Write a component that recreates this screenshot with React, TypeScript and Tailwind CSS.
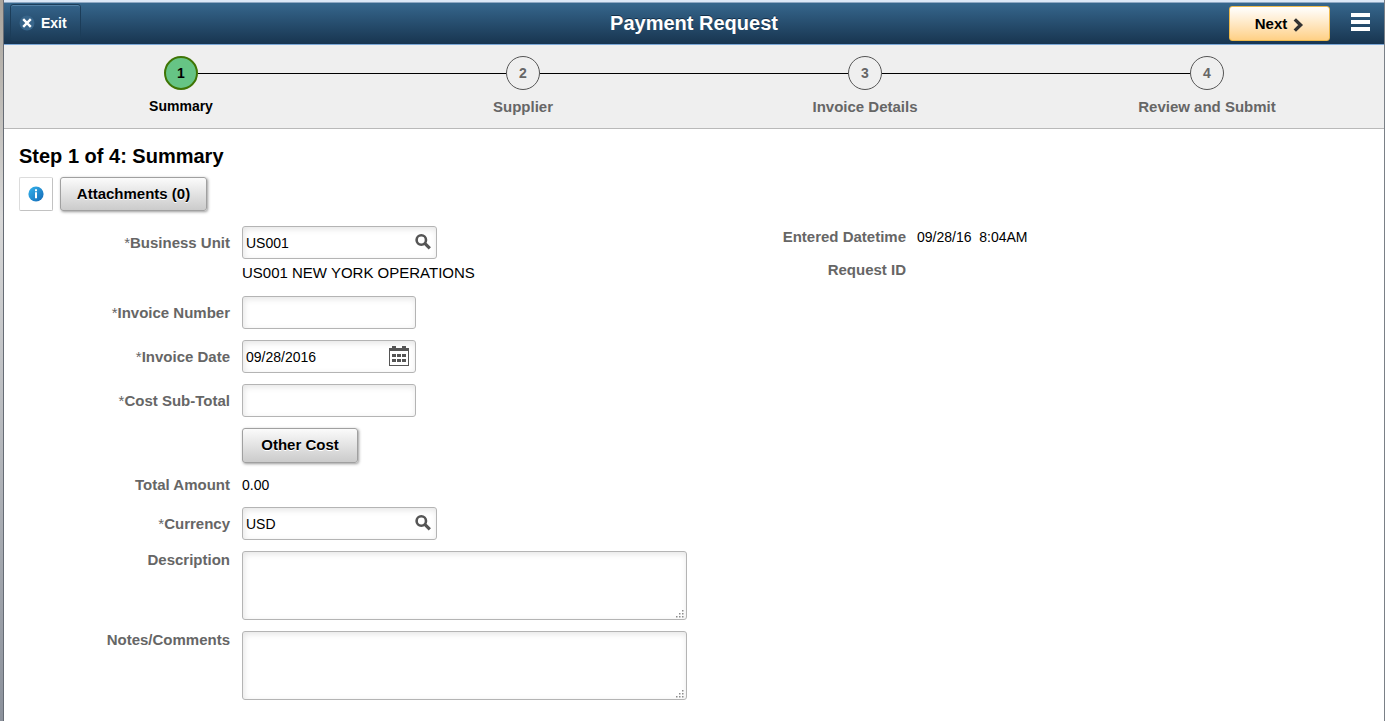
import type { ReactNode } from "react";

const fieldBox =
  "flex items-center h-[33px] rounded-[3px] border border-[#b4b4b4] bg-white shadow-[inset_1px_2px_6px_#e4e4e4]";
const fieldInput =
  "h-full w-full min-w-0 bg-transparent pl-[3px] text-sm text-black outline-none";
const greyButton =
  "rounded-[3px] border border-[#a0a0a0] bg-linear-to-b from-[#fbfbfb] to-[#cbcbcb] text-[15px] font-bold text-black shadow-[1px_1px_3px_#999999] [text-shadow:0_1px_0_#ffffff]";

const steps = ["Summary", "Supplier", "Invoice Details", "Review and Submit"];

function SearchIcon() {
  return (
    <svg width="16" height="16" viewBox="0 0 16 16" fill="none" stroke="#555555">
      <circle cx="6.3" cy="6" r="4.7" strokeWidth="2.6" />
      <path d="M9.8 9.4l5 5" strokeWidth="3.2" />
    </svg>
  );
}

function CalendarIcon() {
  return (
    <svg width="20" height="20" viewBox="0 0 20 20" fill="#555555">
      <path d="M0 2h3V0h4v2h6V0h4v2h3v18H0z M1 5v14h18V5z" fillRule="evenodd" />
      {[8, 13].map((y) =>
        [3, 8, 13].map((x) => <rect key={`${x}-${y}`} x={x} y={y} width="4" height="3" />)
      )}
    </svg>
  );
}

function Grip() {
  return (
    <svg
      className="pointer-events-none absolute right-[3px] bottom-[2px]"
      width="8"
      height="8"
      viewBox="0 0 8 8"
      fill="#8c8c8c"
    >
      <path d="M6 0h1.5v1.5H6z M3 3h1.5v1.5H3z M6 3h1.5v1.5H6z M0 6h1.5v1.5H0z M3 6h1.5v1.5H3z M6 6h1.5v1.5H6z" />
    </svg>
  );
}

type RowProps = {
  label?: string;
  htmlFor?: string;
  required?: boolean;
  short?: boolean;
  children?: ReactNode;
};

function Row({ label, htmlFor, required, short, children }: RowProps) {
  return (
    <div className="flex gap-3">
      <label
        htmlFor={htmlFor}
        className={`w-[211px] shrink-0 text-right text-[15px] font-bold text-[#666666] ${
          short ? "leading-[18px]" : "leading-[33px]"
        }`}
      >
        {required && <span className="font-normal">*</span>}
        {label}
      </label>
      {children}
    </div>
  );
}

function LookupField({ id, value, label }: { id: string; value: string; label: string }) {
  return (
    <div className={`${fieldBox} w-[195px]`}>
      <input id={id} defaultValue={value} className={fieldInput} />
      <button type="button" aria-label={label} className="mr-[5px] mb-[2px] shrink-0">
        <SearchIcon />
      </button>
    </div>
  );
}

function NoteField({ id }: { id: string }) {
  return (
    <div className="relative flex w-[445px]">
      <textarea
        id={id}
        className="h-[69px] w-full resize-none rounded-[3px] border border-[#b4b4b4] bg-white p-1 text-sm shadow-[inset_1px_2px_6px_#e4e4e4] outline-none"
      />
      <Grip />
    </div>
  );
}

function Header() {
  return (
    <header className="border-t-2 border-[#dce8f6]">
      <div className="grid grid-cols-[1fr_auto_1fr] items-center border-t border-b border-t-[#8fa9c4] border-b-[#7ba7d6] bg-linear-to-b from-[#36678d] to-[#183550]">
        <div className="pt-px pb-[3px] pl-[6px]">
          <button
            type="button"
            className="flex h-[37px] w-[71px] items-center gap-[6px] rounded-[3px] border border-[#1c3d59] bg-linear-to-b from-[#34638a] to-[#1c3c58] pl-2 text-sm font-bold text-white shadow-[inset_0_1px_0_#5583a8]"
          >
            <svg width="16" height="16" viewBox="0 0 16 16">
              <circle cx="8" cy="8" r="7.5" fill="#38658a" />
              <path d="M4.2 4.2l7.6 7.6M11.8 4.2l-7.6 7.6" stroke="#ffffff" strokeWidth="2.4" />
            </svg>
            Exit
          </button>
        </div>
        <h1 className="pb-[2px] text-xl font-bold text-white [text-shadow:0_-1px_0_#14304a]">Payment Request</h1>
        <div className="flex items-center justify-end gap-[21px] pr-[14px]">
          <button
            type="button"
            className="flex h-[35px] w-[101px] items-center justify-center gap-[6px] rounded-[3px] border border-[#edb94c] bg-linear-to-b from-white to-[#ffd085] pt-[2px] text-[15px] font-bold text-black"
          >
            Next
            <svg width="11" height="14" viewBox="0 0 11 14" fill="none" stroke="#333333" strokeWidth="3.4">
              <path d="M1.8 1.4L7.6 7l-5.8 5.6" />
            </svg>
          </button>
          <button type="button" aria-label="Actions" className="mb-1">
            <svg width="19" height="18" viewBox="0 0 19 18" fill="#ffffff">
              <path d="M0 0h19v4H0z M0 7h19v4H0z M0 14h19v4H0z" />
            </svg>
          </button>
        </div>
      </div>
    </header>
  );
}

function Stepper() {
  return (
    <ol className="flex border-b border-[#b9b9b9] bg-[#efefef] px-[6px] pt-[11px] pb-[11px]">
      {steps.map((name, i) => (
        <li key={name} className="flex flex-1 flex-col items-center">
          <div className="flex w-full items-center">
            <span className={`h-px flex-1 ${i > 0 ? "bg-black" : ""}`} />
            <span
              className={`flex size-[34px] items-center justify-center rounded-full text-sm font-bold ${
                i === 0
                  ? "border-2 border-[#3f7505] bg-[#66c485] text-black"
                  : "border border-[#555555] text-[#666666]"
              }`}
            >
              {i + 1}
            </span>
            <span className={`h-px flex-1 ${i < steps.length - 1 ? "bg-black" : ""}`} />
          </div>
          <span
            className={`mt-[6px] font-bold leading-[21px] ${
              i === 0 ? "text-sm text-black" : "text-[15px] text-[#666666]"
            }`}
          >
            {name}
          </span>
        </li>
      ))}
    </ol>
  );
}

export default function App() {
  return (
    <div className="flex min-h-screen bg-white font-['Liberation_Sans',Arial,sans-serif] text-black">
      {/* Window edge */}
      <div className="w-1 shrink-0 border-r border-[#666c75] bg-linear-to-b from-[#a9a49c] via-[#d8d8d8] via-30% to-[#8b919b]" />
      <div className="flex-1 border-r border-[#7a8087]">
        <Header />
        <Stepper />
        <main>
          <div className="px-[15px] pt-[15px]">
            <h2 className="text-xl leading-6 font-bold">Step 1 of 4: Summary</h2>
            <div className="mt-[9px] flex gap-[7px]">
              <button
                type="button"
                aria-label="Information"
                className="flex size-[34px] items-center justify-center rounded-[2px] border border-[#dcdcdc] border-r-[#c2c2c2] border-b-[#c2c2c2] bg-white"
              >
                <svg width="16" height="16" viewBox="0 0 16 16">
                  <defs>
                    <linearGradient id="info" x1="0" y1="0" x2="1" y2="1">
                      <stop offset="0" stopColor="#35b5ee" />
                      <stop offset="1" stopColor="#1467b4" />
                    </linearGradient>
                  </defs>
                  <circle cx="8" cy="8" r="7.6" fill="url(#info)" />
                  <path d="M7 3.2h2v2H7z M7 6.3h2v6H7z" fill="#ffffff" />
                </svg>
              </button>
              <button type="button" className={`${greyButton} h-[34px] w-[147px]`}>
                Attachments (0)
              </button>
            </div>
          </div>

          <form className="mt-[15px] grid grid-cols-2">
            <div className="flex flex-col gap-[11px] pl-[15px]">
              <Row label="Business Unit" htmlFor="unit" required>
                <div>
                  <LookupField id="unit" value="US001" label="Look up business unit" />
                  <p className="mt-[2px] text-[15px] leading-6">US001 NEW YORK OPERATIONS</p>
                </div>
              </Row>
              <Row label="Invoice Number" htmlFor="number" required>
                <div className={`${fieldBox} w-[174px]`}>
                  <input id="number" className={fieldInput} />
                </div>
              </Row>
              <Row label="Invoice Date" htmlFor="date" required>
                <div className={`${fieldBox} w-[174px]`}>
                  <input id="date" defaultValue="09/28/2016" className={fieldInput} />
                  <button type="button" aria-label="Choose date" className="mr-[6px] mb-[2px] shrink-0">
                    <CalendarIcon />
                  </button>
                </div>
              </Row>
              <Row label="Cost Sub-Total" htmlFor="subtotal" required>
                <div className={`${fieldBox} w-[174px]`}>
                  <input id="subtotal" className={fieldInput} />
                </div>
              </Row>
              <Row>
                <button type="button" className={`${greyButton} h-[35px] w-[116px]`}>
                  Other Cost
                </button>
              </Row>
              <div className="flex gap-3 leading-[22px]">
                <span className="w-[211px] text-right text-[15px] font-bold text-[#666666]">Total Amount</span>
                <span className="text-sm leading-[22px]">0.00</span>
              </div>
              <Row label="Currency" htmlFor="currency" required>
                <LookupField id="currency" value="USD" label="Look up currency" />
              </Row>
              <Row label="Description" htmlFor="description" short>
                <NoteField id="description" />
              </Row>
              <Row label="Notes/Comments" htmlFor="notes" short>
                <NoteField id="notes" />
              </Row>
            </div>

            <dl className="grid grid-cols-[212px_1fr] content-start gap-x-[11px] gap-y-[11px] leading-[22px]">
              <dt className="text-right text-[15px] leading-[22px] font-bold text-[#666666]">Entered Datetime</dt>
              <dd className="text-sm leading-[22px] whitespace-pre">09/28/16  8:04AM</dd>
              <dt className="text-right text-[15px] leading-[22px] font-bold text-[#666666]">Request ID</dt>
              <dd />
            </dl>
          </form>
        </main>
      </div>
    </div>
  );
}
